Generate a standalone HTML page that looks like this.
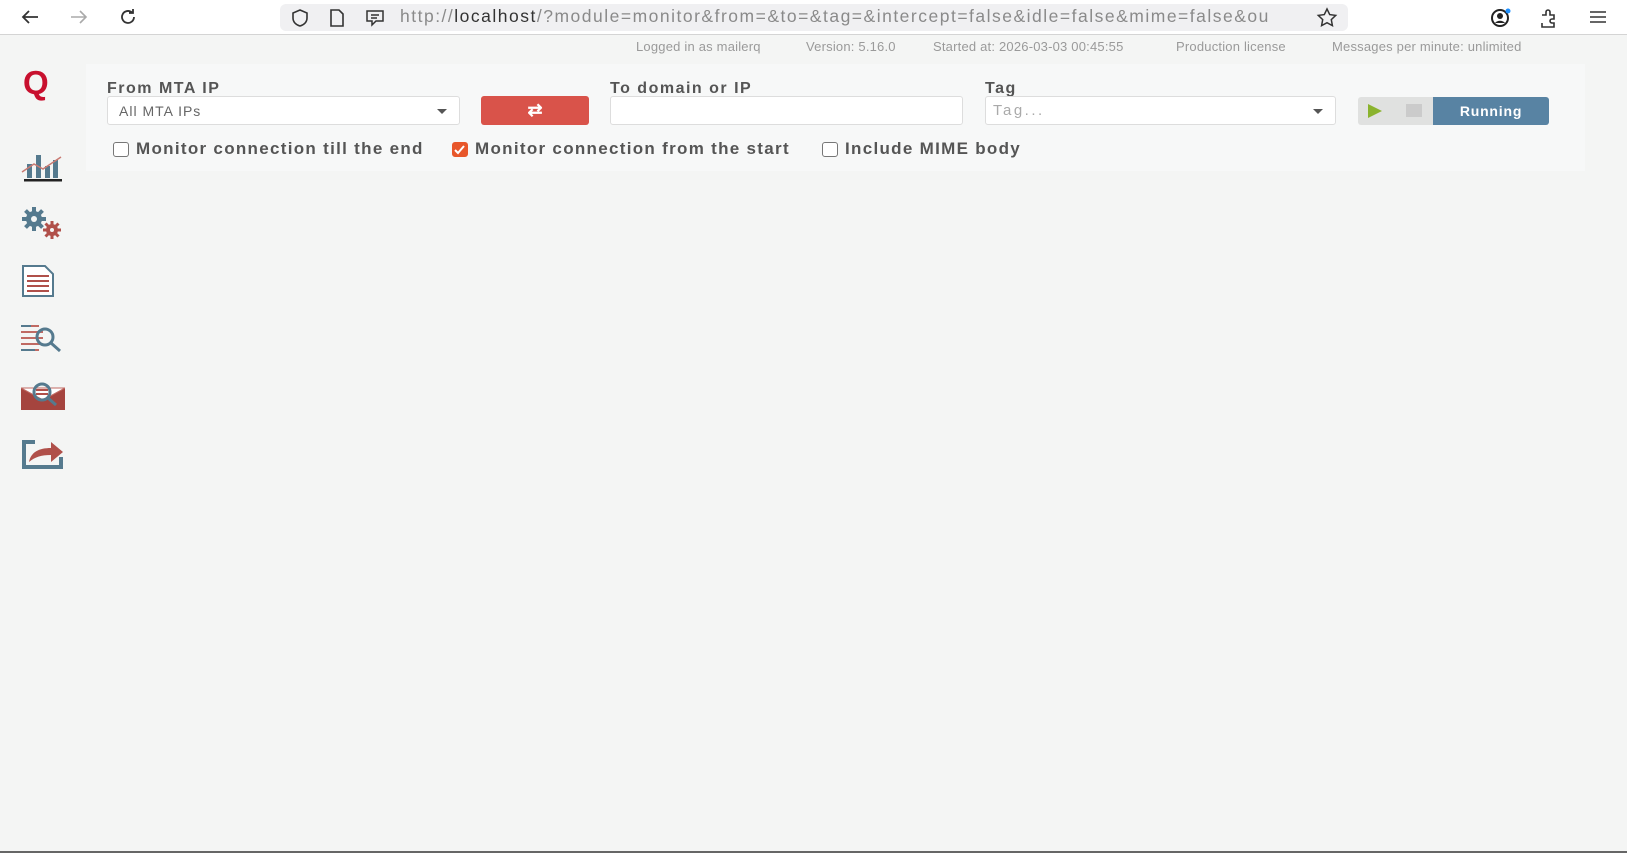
<!DOCTYPE html>
<html><head><meta charset="utf-8"><style>
*{box-sizing:border-box;margin:0;padding:0}
body{width:1627px;height:853px;overflow:hidden;background:#f4f5f4;font-family:"Liberation Sans",sans-serif;position:relative}
.tb{position:absolute;left:0;top:0;width:1627px;height:35px;background:#fff;border-bottom:1px solid #d4d4d4}
.url{position:absolute;left:280px;top:4px;width:1068px;height:27px;background:#f0f0f2;border-radius:6px}
.urltext{position:absolute;left:400px;top:6px;font-size:17.5px;letter-spacing:1.5px;color:#8a8a8a;white-space:nowrap;width:905px;overflow:hidden}
.urltext b{font-weight:normal;color:#333}
.abs{position:absolute}
.info{position:absolute;top:39px;font-size:13px;letter-spacing:0.2px;color:#9a9a9a;white-space:nowrap}
.panel{position:absolute;left:86px;top:64px;width:1499px;height:107px;background:#f7f8f8}
.lbl{position:absolute;top:80px;font-size:16px;letter-spacing:1.5px;color:#555;font-weight:bold}
.inp{position:absolute;top:96px;height:29px;background:#fff;border:1px solid #ddd;border-radius:3px}
.caret{position:absolute;right:12px;top:12px;border-left:5px solid transparent;border-right:5px solid transparent;border-top:5px solid #555}
.cb{position:absolute;top:142px;width:16px;height:15px;border:1px solid #777;border-radius:3px;background:#fff}
.cbt{position:absolute;top:139px;font-size:17px;letter-spacing:1.3px;color:#555;font-weight:bold;white-space:nowrap}
</style></head><body>
<div class="tb">
<svg class="abs" style="left:20px;top:8px" width="20" height="18" viewBox="0 0 20 18"><path d="M18 9H3M9 3L3 9l6 6" fill="none" stroke="#333" stroke-width="1.8"/></svg>
<svg class="abs" style="left:69px;top:8px" width="20" height="18" viewBox="0 0 20 18"><path d="M2 9h15M11 3l6 6-6 6" fill="none" stroke="#aaa" stroke-width="1.6"/></svg>
<svg class="abs" style="left:118px;top:7px" width="20" height="20" viewBox="0 0 20 20"><path d="M16 10a6 6 0 1 1-2-4.5M15 2v4h-4" fill="none" stroke="#333" stroke-width="1.8"/></svg>
<div class="url"></div>
<svg class="abs" style="left:290px;top:8px" width="20" height="20" viewBox="0 0 20 20"><path d="M10 2l7 3v5c0 4-3 7-7 8-4-1-7-4-7-8V5z" fill="none" stroke="#333" stroke-width="1.6"/></svg>
<svg class="abs" style="left:328px;top:8px" width="18" height="20" viewBox="0 0 18 20"><path d="M3 2h8l4 4v12H3z" fill="none" stroke="#333" stroke-width="1.6"/></svg>
<svg class="abs" style="left:365px;top:9px" width="20" height="18" viewBox="0 0 20 18"><path d="M2 2h16v10h-7l-4 4v-4H2z M6 6h8M6 9h6" fill="none" stroke="#333" stroke-width="1.5"/></svg>
<div class="urltext">http://<b>localhost</b>/?module=monitor&amp;from=&amp;to=&amp;tag=&amp;intercept=false&amp;idle=false&amp;mime=false&amp;ou</div>
<svg class="abs" style="left:1316px;top:7px" width="22" height="20" viewBox="0 0 22 20"><path d="M11 2l2.7 5.6 6 .8-4.4 4.2 1.1 6L11 15.7 5.6 18.6l1.1-6L2.3 8.4l6-.8z" fill="none" stroke="#333" stroke-width="1.5"/></svg>
<svg class="abs" style="left:1489px;top:7px" width="24" height="22" viewBox="0 0 24 22"><circle cx="11" cy="11" r="8" fill="none" stroke="#222" stroke-width="2"/><circle cx="11" cy="9" r="3" fill="#222"/><path d="M6 16c2-3 8-3 10 0" fill="#222"/><circle cx="19" cy="4" r="2.5" fill="#1e90ff"/></svg>
<svg class="abs" style="left:1538px;top:7px" width="22" height="22" viewBox="0 0 22 22"><path d="M4 8h4V5a2 2 0 0 1 4 0v3h4v4h-2a2 2 0 0 0 0 4h2v4H4v-4" fill="none" stroke="#333" stroke-width="1.6"/></svg>
<svg class="abs" style="left:1588px;top:9px" width="20" height="16" viewBox="0 0 20 16"><path d="M2 3h16M2 8h16M2 13h16" stroke="#333" stroke-width="1.6"/></svg>
</div>
<div class="info" style="left:636px">Logged in as mailerq</div>
<div class="info" style="left:806px">Version: 5.16.0</div>
<div class="info" style="left:933px">Started at: 2026-03-03 00:45:55</div>
<div class="info" style="left:1176px">Production license</div>
<div class="info" style="left:1332px">Messages per minute: unlimited</div>

<div class="abs" style="left:23px;top:64px;font-size:33px;font-weight:bold;color:#c8102e">Q</div>
<svg class="abs" style="left:21px;top:152px" width="44" height="30" viewBox="0 0 44 30"><rect x="6" y="12" width="5" height="14" fill="#557a8e"/><rect x="15" y="3" width="5" height="23" fill="#557a8e"/><rect x="24" y="14" width="5" height="12" fill="#557a8e"/><rect x="32" y="8" width="5" height="18" fill="#557a8e"/><path d="M1 20l12-8 9 5 18-12" fill="none" stroke="#c97a72" stroke-width="1.5"/><rect x="3" y="27" width="38" height="2.5" fill="#222"/></svg>
<svg class="abs" style="left:21px;top:206px" width="44" height="34" viewBox="0 0 44 34"><g fill="#557a8e"><circle cx="13" cy="13" r="8"/><g stroke="#557a8e" stroke-width="4"><path d="M13 1v24M1 13h24M4.5 4.5l17 17M21.5 4.5l-17 17"/></g></g><circle cx="13" cy="13" r="3" fill="#f4f5f4"/><g fill="#b0504a"><circle cx="31" cy="24" r="6"/><g stroke="#b0504a" stroke-width="3"><path d="M31 15v18M22 24h18M24.5 17.5l13 13M37.5 17.5l-13 13"/></g></g><circle cx="31" cy="24" r="2" fill="#f4f5f4"/></svg>
<svg class="abs" style="left:21px;top:264px" width="34" height="34" viewBox="0 0 34 34"><path d="M2 2h22l8 8v22H2z" fill="#fff" stroke="#557a8e" stroke-width="2"/><path d="M6 12h22M6 17h22M6 22h22M6 27h22" stroke="#b0504a" stroke-width="2"/></svg>
<svg class="abs" style="left:21px;top:323px" width="44" height="32" viewBox="0 0 44 32"><path d="M0 3h18M0 9h22M0 15h22M0 21h20M0 27h18" stroke="#c06a63" stroke-width="2"/><path d="M0 3h10M0 27h14" stroke="#557a8e" stroke-width="2"/><circle cx="24" cy="14" r="8" fill="none" stroke="#557a8e" stroke-width="3"/><path d="M30 20l9 8" stroke="#557a8e" stroke-width="3"/></svg>
<svg class="abs" style="left:21px;top:380px" width="44" height="30" viewBox="0 0 44 30"><path d="M0 8l22 12 22-12v22H0z" fill="#a5443e"/><path d="M0 8h44l-22 12z" fill="#fff" stroke="#c06a63"/><circle cx="21" cy="12" r="8" fill="none" stroke="#557a8e" stroke-width="3"/><path d="M15 10h12M15 14h12" stroke="#b0504a" stroke-width="2"/><path d="M27 18l8 7" stroke="#557a8e" stroke-width="3"/></svg>
<svg class="abs" style="left:21px;top:436px" width="44" height="34" viewBox="0 0 44 34"><path d="M14 6H3v25h37v-10" fill="none" stroke="#557a8e" stroke-width="4"/><path d="M8 26c2-10 10-14 22-14V6l12 10-12 10v-7c-10 0-16 2-22 7z" fill="#b0504a"/></svg>

<div class="panel"></div>
<div class="lbl" style="left:107px">From MTA IP</div>
<div class="inp" style="left:107px;width:353px"><span style="position:absolute;left:11px;top:6px;font-size:14px;letter-spacing:1px;color:#666">All MTA IPs</span><div class="caret"></div></div>
<div class="abs" style="left:481px;top:96px;width:108px;height:29px;background:#d9534a;border-radius:3px;color:#fff;text-align:center;font-size:18px;line-height:28px;font-weight:bold">&#8644;</div>
<div class="lbl" style="left:610px">To domain or IP</div>
<div class="inp" style="left:610px;width:353px"></div>
<div class="lbl" style="left:985px">Tag</div>
<div class="inp" style="left:985px;width:351px"><span style="position:absolute;left:7px;top:5px;font-size:15px;color:#aaa;letter-spacing:2.5px">Tag...</span><div class="caret"></div></div>
<div class="abs" style="left:1358px;top:97px;width:76px;height:28px;background:#e0e1e0;border-radius:3px 0 0 3px"></div>
<svg class="abs" style="left:1367px;top:103px" width="16" height="16" viewBox="0 0 16 16"><path d="M1 1l14 7-14 7z" fill="#8ab32e"/></svg>
<div class="abs" style="left:1406px;top:104px;width:16px;height:13px;background:#cbcbcb"></div>
<div class="abs" style="left:1433px;top:97px;width:116px;height:28px;background:#5883a3;border-radius:0 3px 3px 0;color:#fff;font-weight:bold;font-size:14px;letter-spacing:0.8px;text-align:center;line-height:28px">Running</div>

<div class="cb" style="left:113px"></div><div class="cbt" style="left:136px">Monitor connection till the end</div>
<div class="cb" style="left:452px;background:#e8572b;border-color:#e8572b"><svg width="14" height="13" viewBox="0 0 14 13" style="position:absolute;left:0;top:0"><path d="M2 7l3 3 6-7" fill="none" stroke="#fff" stroke-width="2"/></svg></div><div class="cbt" style="left:475px">Monitor connection from the start</div>
<div class="cb" style="left:822px"></div><div class="cbt" style="left:845px">Include MIME body</div>

<div class="abs" style="left:0;top:851px;width:1627px;height:2px;background:#666"></div>
</body></html>
